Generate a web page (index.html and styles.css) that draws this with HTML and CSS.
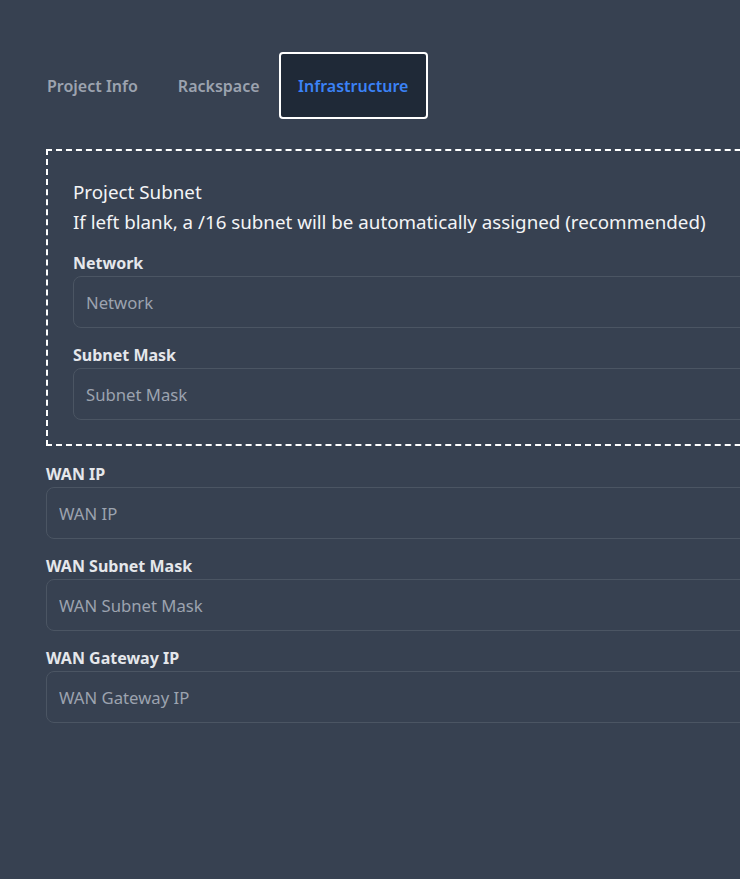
FILE: index.html
```html
<!DOCTYPE html>
<html>
<head>
<meta charset="utf-8">
<link rel="stylesheet" href="styles.css">
</head>
<body>
<div class="page">
  <nav class="tabs">
    <button class="tab">Project Info</button>
    <button class="tab">Rackspace</button>
    <button class="tab active">Infrastructure</button>
  </nav>
  <section class="form">
    <div class="subnet-box">
      <div class="box-title">Project Subnet</div>
      <div class="box-desc">If left blank, a /16 subnet will be automatically assigned (recommended)</div>
      <div class="field">
        <label class="label">Network</label>
        <input class="input" placeholder="Network">
      </div>
      <div class="field">
        <label class="label">Subnet Mask</label>
        <input class="input" placeholder="Subnet Mask">
      </div>
    </div>
    <div class="field">
      <label class="label">WAN IP</label>
      <input class="input" placeholder="WAN IP">
    </div>
    <div class="field">
      <label class="label">WAN Subnet Mask</label>
      <input class="input" placeholder="WAN Subnet Mask">
    </div>
    <div class="field">
      <label class="label">WAN Gateway IP</label>
      <input class="input" placeholder="WAN Gateway IP">
    </div>
  </section>
</div>
</body>
</html>
```

FILE: styles.css
```css
* { box-sizing: border-box; }
html, body {
  margin: 0;
  padding: 0;
  background: #374151;
  overflow: hidden;
  height: 100%;
}
body {
  font-family: "Noto Sans", "Open Sans", sans-serif;
  color: #e5e7eb;
}
.page {
  width: 1100px;
  padding: 52px 0 0 46px;
}
.tabs {
  display: flex;
  align-items: center;
  margin-left: -19px;
}
.tab {
  font-family: inherit;
  font-size: 16px;
  font-weight: 600;
  color: #9ca3af;
  background: transparent;
  border: 2px solid transparent;
  border-radius: 4px;
  height: 67px;
  padding: 0 18px;
  cursor: pointer;
}
.tab.active {
  background: #1f2937;
  border-color: #ffffff;
  color: #3b82f6;
  padding: 0 17.5px;
  margin-left: -1px;
}
.form {
  margin-top: 30px;
  display: flex;
  flex-direction: column;
}
.subnet-box {
  border: 2px dashed #ffffff;
  padding: 26px 25px 24px 25px;
  margin-bottom: 16px;
}
.box-title {
  font-size: 18.8px;
  line-height: 30px;
  color: #f3f4f6;
}
.box-desc {
  font-size: 18.75px;
  line-height: 30px;
  color: #f3f4f6;
  margin-bottom: 14px;
}
.field {
  display: flex;
  flex-direction: column;
  margin-bottom: 15px;
}
.subnet-box .field:last-child { margin-bottom: 0; }
.label {
  font-size: 16px;
  font-weight: 700;
  color: #e5e7eb;
  line-height: 24px;
  margin-bottom: 1px;
}
.input {
  font-family: inherit;
  font-size: 16.7px;
  height: 52px;
  padding: 0 12px;
  background: #374151;
  border: 1px solid #4b5563;
  border-radius: 8px;
  color: #e5e7eb;
  width: 100%;
  outline: none;
}
.input::placeholder { color: #9ca3af; }
```
